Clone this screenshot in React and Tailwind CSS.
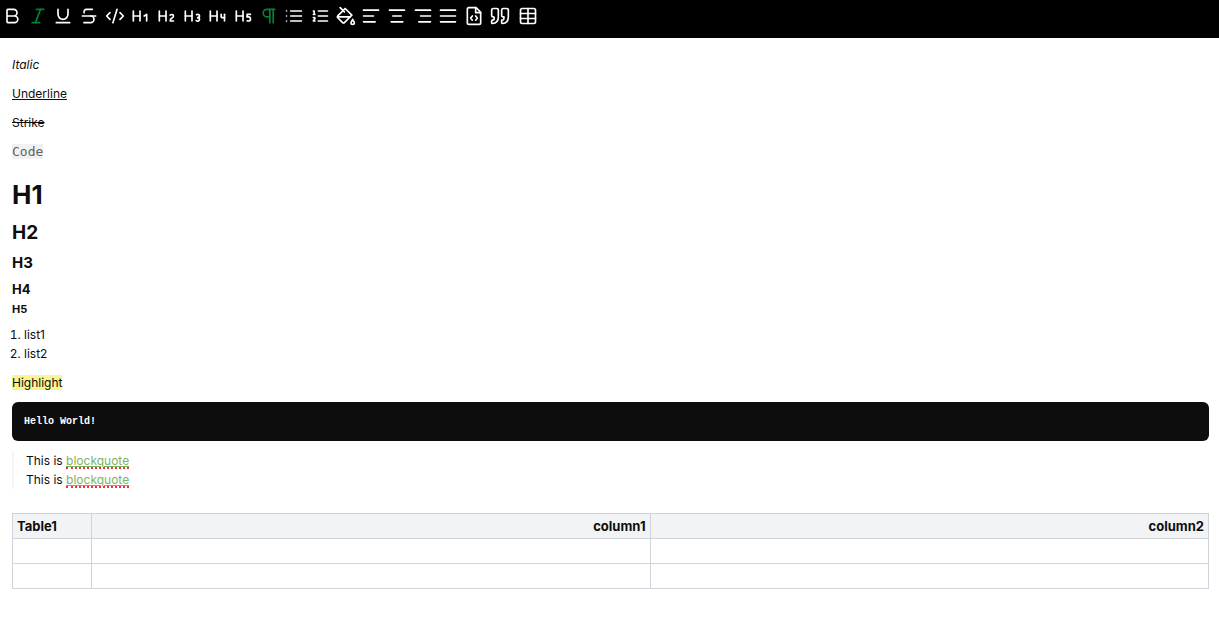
import React, { useState } from "react";
import {
  AlignCenter,
  AlignJustify,
  AlignLeft,
  AlignRight,
  Bold,
  CodeXml,
  Heading1,
  Heading2,
  Heading3,
  Heading4,
  Heading5,
  Italic,
  Pilcrow,
  Strikethrough,
  Underline,
} from "lucide-react";

const Svg = ({ children }) => (
  <svg
    viewBox="0 0 24 24"
    fill="none"
    stroke="currentColor"
    strokeWidth="2"
    strokeLinecap="round"
    strokeLinejoin="round"
    className="size-5"
  >
    {children}
  </svg>
);

const BulletList = () => (
  <Svg>
    <path d="M8 6h13M8 12h13M8 18h13M3 6h.01M3 12h.01M3 18h.01" />
  </Svg>
);

const OrderedList = () => (
  <Svg>
    <path d="M10 6h11M10 12h11M10 18h11M4 6h1v4M4 10h2M6 18H4c0-1 2-2 2-3s-1-1.5-2-1" />
  </Svg>
);

const Bucket = () => (
  <Svg>
    <path d="m19 11-8-8-8.6 8.6a2 2 0 0 0 0 2.8l5.2 5.2c.8.8 2 .8 2.8 0L19 11Z" />
    <path d="m5 2 5 5M2 13h15" />
    <path d="M22 20a2 2 0 1 1-4 0c0-1.6 1.7-2.4 2-4 .3 1.6 2 2.4 2 4Z" />
  </Svg>
);

const CodeFile = () => (
  <Svg>
    <path d="M14.5 2H6a2 2 0 0 0-2 2v16a2 2 0 0 0 2 2h12a2 2 0 0 0 2-2V7.5L14.5 2z" />
    <path d="M14 2v6h6" />
    <path d="m10 12-2 2.5 2 2.5M14 12l2 2.5-2 2.5" />
  </Svg>
);

const Quotes = () => (
  <Svg>
    <path d="M3 21c3 0 7-1 7-8V5c0-1.25-.756-2.017-2-2H4c-1.25 0-2 .75-2 1.972V11c0 1.25.75 2 2 2 1 0 1 0 1 1v1c0 1-1 2-2 2s-1 .008-1 1.031V20c0 1 0 1 1 1z" />
    <path d="M15 21c3 0 7-1 7-8V5c0-1.25-.757-2.017-2-2h-4c-1.25 0-2 .75-2 1.972V11c0 1.25.75 2 2 2h.75c0 2.25.25 4-2.75 4v3c0 1 0 1 1 1z" />
  </Svg>
);

const Grid = () => (
  <Svg>
    <rect x="3" y="3" width="18" height="18" rx="2" />
    <path d="M12 3v18M3 9h18M3 15h18" />
  </Svg>
);

const tools = [
  { name: "Bold", icon: Bold },
  { name: "Italic", icon: Italic },
  { name: "Underline", icon: Underline },
  { name: "Strike", icon: Strikethrough },
  { name: "Code", icon: CodeXml },
  { name: "Heading 1", icon: Heading1 },
  { name: "Heading 2", icon: Heading2 },
  { name: "Heading 3", icon: Heading3 },
  { name: "Heading 4", icon: Heading4 },
  { name: "Heading 5", icon: Heading5 },
  { name: "Paragraph", icon: Pilcrow },
  { name: "Bullet list", icon: BulletList },
  { name: "Ordered list", icon: OrderedList },
  { name: "Highlight", icon: Bucket },
  { name: "Align left", icon: AlignLeft },
  { name: "Align center", icon: AlignCenter },
  { name: "Align right", icon: AlignRight },
  { name: "Justify", icon: AlignJustify },
  { name: "Code block", icon: CodeFile },
  { name: "Blockquote", icon: Quotes },
];

const Toolbar = () => {
  const [active, setActive] = useState(["Italic", "Paragraph"]);

  const toggle = (name) => {
    setActive(
      active.includes(name)
        ? active.filter((item) => item !== name)
        : [...active, name]
    );
  };

  return (
    <div className="flex bg-black px-0.5 pt-1.5 pb-3 text-white">
      <div className="flex w-[508px] justify-between">
        {tools.map(({ name, icon: Icon }) => (
          <button
            key={name}
            type="button"
            aria-label={name}
            onClick={() => toggle(name)}
            className={active.includes(name) ? "text-green-700" : "text-white"}
          >
            <Icon className="size-5" />
          </button>
        ))}
      </div>
      <button type="button" aria-label="Table" className="ml-2">
        <Grid />
      </button>
    </div>
  );
};

const QuoteLine = () => (
  <p>
    This is{" "}
    <a
      href="#blockquote"
      className="inline-block border-b-2 border-dotted border-red-500 leading-3 text-[#7db461] underline"
    >
      blockquote
    </a>
  </p>
);

const Content = () => (
  <div className="pt-[17px] pr-2.5 pl-3">
    <div className="flex flex-col gap-2.5">
      <p className="italic">Italic</p>
      <p className="underline">Underline</p>
      <p className="line-through">Strike</p>
      <p>
        <code className="bg-[#f1f1f1] font-['DejaVu_Sans_Mono',monospace] text-[13px] text-[#616161]">
          Code
        </code>
      </p>
    </div>

    <h1 className="mt-3.5 text-[26px] leading-10 font-bold">H1</h1>
    <h2 className="mt-1 text-[19px] leading-7 font-bold">H2</h2>
    <h3 className="mt-1 text-[15px] leading-6 font-bold">H3</h3>
    <h4 className="mt-1 text-[13px] leading-5 font-bold">H4</h4>
    <h5 className="mt-0.5 text-[11px] leading-4 font-bold">H5</h5>

    <ol className="mt-2 list-decimal pl-3">
      <li>list1</li>
      <li>list2</li>
    </ol>

    <p className="mt-2.5">
      <mark className="bg-[#faf594] text-inherit">Highlight</mark>
    </p>

    <pre className="mt-2.5 rounded-md bg-[#0d0d0d] px-3 py-2.5 font-['DejaVu_Sans_Mono',monospace] text-[10px] leading-[18px] font-bold text-white">
      <code>Hello World!</code>
    </pre>

    <blockquote className="mt-2.5 border-l-2 border-[#f5f5f5] pl-3">
      <QuoteLine />
      <QuoteLine />
    </blockquote>

    <table className="mt-6 w-full table-fixed border-collapse text-[13px]">
      <colgroup>
        <col className="w-[79px]" />
        <col />
        <col />
      </colgroup>
      <thead>
        <tr className="h-[25px] bg-[#f1f3f5]">
          <th className="border border-[#ced4da] px-1 text-left">Table1</th>
          <th className="border border-[#ced4da] px-1 text-right">column1</th>
          <th className="border border-[#ced4da] px-1 text-right">column2</th>
        </tr>
      </thead>
      <tbody>
        {[1, 2].map((row) => (
          <tr key={row} className="h-[25px]">
            <td className="border border-[#ced4da]"></td>
            <td className="border border-[#ced4da]"></td>
            <td className="border border-[#ced4da]"></td>
          </tr>
        ))}
      </tbody>
    </table>
  </div>
);

const App = () => {
  return (
    <div className="min-h-screen bg-white font-[Inter,sans-serif] text-xs leading-[19px] text-[#0d0d0d]">
      <Toolbar />
      <Content />
    </div>
  );
};

export default App;
